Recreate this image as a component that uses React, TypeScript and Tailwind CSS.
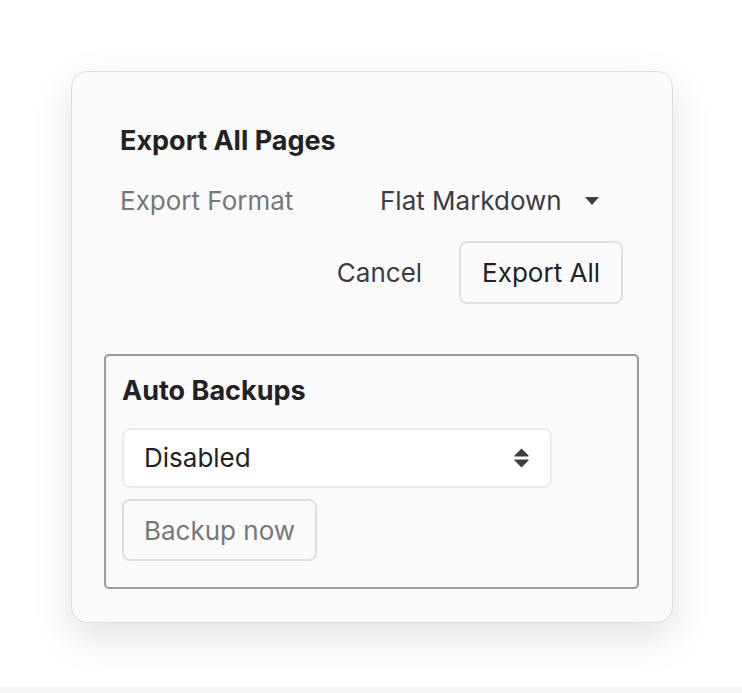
import React, { useState } from 'react';

const ChevronUpDown: React.FC = () => (
  <svg width="17" height="22" viewBox="0 0 17 22" fill="#3a3d42">
    <path d="M8.5 1.5 L15.5 8.5 Q16 9.5 15 9.5 L2 9.5 Q1 9.5 1.5 8.5 Z" />
    <path d="M8.5 20.5 L15.5 13.5 Q16 12.5 15 12.5 L2 12.5 Q1 12.5 1.5 13.5 Z" />
  </svg>
);

const CaretDown: React.FC = () => (
  <svg width="16" height="10" viewBox="0 0 16 10" fill="#3a3d42">
    <path d="M1 1 L15 1 L8 9 Z" />
  </svg>
);

export default function App() {
  const [format] = useState('Flat Markdown');
  const [backup] = useState('Disabled');

  return (
    <div className="flex h-[693px] flex-col bg-white font-['Inter',sans-serif]">
      <div className="flex-1 pt-[71px]">
        <div className="ml-[71px] w-[602px] rounded-[16px] border border-[#dedede] bg-[#fafafa] pl-[48px] pr-[49px] pt-[53px] pb-[33px] shadow-[0_14px_40px_rgba(0,0,0,0.12)]">
          <h2 className="text-[27px] font-bold leading-[32px] text-[#222]">Export All Pages</h2>

          <div className="mt-[24px] flex h-[40px] items-center">
            <span className="w-[260px] text-[26px] leading-[32px] text-[#777]">Export Format</span>
            <button className="flex items-center text-[26px] leading-[32px] text-[#3a3d42]">
              {format}
              <span className="ml-[22px]">
                <CaretDown />
              </span>
            </button>
          </div>

          <div className="mt-[20px] flex items-center justify-end">
            <button className="mr-[19px] px-[18px] text-[26px] leading-[32px] text-[#3a3d42]">Cancel</button>
            <button className="h-[63px] rounded-[8px] border-2 border-[#e0e0e0] bg-[#fafafa] px-[21px] text-[26px] text-[#222]">
              Export All
            </button>
          </div>

          <div className="-mx-[16px] mt-[50px] rounded-[5px] border-2 border-[#9a9a9a] px-[16px] pt-[19px] pb-[26px]">
            <h3 className="text-[27px] font-bold leading-[32px] text-[#222]">Auto Backups</h3>
            <div className="mt-[21px] flex h-[60px] w-[430px] items-center justify-between rounded-[8px] border-2 border-[#ebebeb] bg-white pl-[20px] pr-[20px]">
              <span className="text-[26px] leading-[32px] text-[#222]">{backup}</span>
              <ChevronUpDown />
            </div>
            <button className="mt-[11px] h-[62px] rounded-[8px] border-2 border-[#dedede] bg-[#fafafa] px-[20px] text-[26px] text-[#777]">
              Backup now
            </button>
          </div>
        </div>
      </div>
      <div className="h-[7px] bg-[#f8f8f8]" />
    </div>
  );
}
